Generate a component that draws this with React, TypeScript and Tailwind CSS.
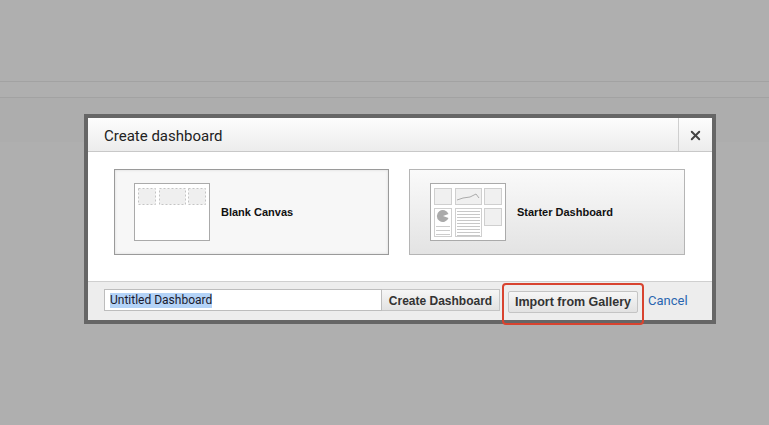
import { X } from "lucide-react";

function BlankThumb() {
  return (
    <svg width="76" height="58" viewBox="0 0 76 58" className="shrink-0">
      <rect x="0.5" y="0.5" width="75" height="57" fill="#fff" stroke="#aaa" />
      <rect x="4.5" y="5.5" width="17" height="16" fill="#efefef" stroke="#c4c4c4" strokeDasharray="2 2" />
      <rect x="25.5" y="5.5" width="26" height="16" fill="#efefef" stroke="#c4c4c4" strokeDasharray="2 2" />
      <rect x="54.5" y="5.5" width="17" height="16" fill="#efefef" stroke="#c4c4c4" strokeDasharray="2 2" />
    </svg>
  );
}

function StarterThumb() {
  const rows = [28, 31, 34, 37, 40, 43, 46, 49, 52];
  return (
    <svg width="76" height="58" viewBox="0 0 76 58" className="shrink-0">
      <rect x="0.5" y="0.5" width="75" height="57" fill="#fff" stroke="#aaa" />
      <rect x="4.5" y="5.5" width="17" height="16" fill="#f0f0f0" stroke="#cfcfcf" />
      <rect x="25.5" y="5.5" width="26" height="16" fill="#f0f0f0" stroke="#cfcfcf" />
      <polyline points="27,17 33,15 40,14 46,11 49,15" fill="none" stroke="#999" strokeWidth="0.8" />
      <rect x="54.5" y="5.5" width="17" height="16" fill="#f0f0f0" stroke="#cfcfcf" />
      <rect x="4.5" y="25.5" width="17" height="28" fill="#fff" stroke="#cfcfcf" />
      <path d="M13 33 L18.5 31 A6 6 0 1 0 18.5 35 Z" fill="#aaa" />
      <line x1="6" y1="43.5" x2="20" y2="43.5" stroke="#ccc" />
      <line x1="6" y1="47.5" x2="20" y2="47.5" stroke="#ccc" />
      <line x1="6" y1="51.5" x2="20" y2="51.5" stroke="#ccc" />
      <rect x="25.5" y="25.5" width="26" height="28" fill="#fff" stroke="#cfcfcf" />
      {rows.map((y) => (
        <line key={y} x1="27" y1={y + 0.5} x2="50" y2={y + 0.5} stroke="#c8c8c8" />
      ))}
      <rect x="54.5" y="25.5" width="17" height="17" fill="#f0f0f0" stroke="#cfcfcf" />
    </svg>
  );
}

export default function App() {
  return (
    <div className="relative h-[425px] w-full overflow-hidden bg-[#afafaf] font-['Roboto',sans-serif]">
      <div className="h-[81px]" />
      <div className="h-[16px] border-t border-[#a2a2a2]" />
      <div className="h-[45px] border-t border-[#a2a2a2] bg-[#adadad]" />

      <div className="absolute left-[84px] top-[114px] flex h-[210px] w-[632px] flex-col border-4 border-[#666] bg-white">
        <div className="flex h-[34px] items-stretch border-b border-[#c8c8c8] bg-gradient-to-b from-[#fdfdfd] to-[#ececec]">
          <div className="flex flex-1 items-center pl-[16px] pt-[3px] text-[15px] text-[#222]">Create dashboard</div>
          <div className="flex w-[34px] items-center justify-center border-l border-[#cfcfcf] pt-[2px]">
            <X size={15} strokeWidth={3} className="text-[#444]" />
          </div>
        </div>

        <div className="flex flex-1 gap-[20px] pl-[26px] pt-[17px]">
          <div className="flex h-[86px] w-[275px] items-center gap-[11px] border border-[#9a9a9a] bg-[#f7f7f7] pl-[19px] shadow-[inset_0_0_3px_rgba(0,0,0,0.12)]">
            <BlankThumb />
            <span className="font-['Liberation_Sans',Arial,sans-serif] text-[11px] font-bold text-[#111]">Blank Canvas</span>
          </div>
          <div className="flex h-[86px] w-[276px] items-center gap-[11px] border border-[#b5b5b5] bg-gradient-to-b from-[#fafafa] to-[#e3e3e3] pl-[20px]">
            <StarterThumb />
            <span className="font-['Liberation_Sans',Arial,sans-serif] text-[11px] font-bold text-[#111]">Starter Dashboard</span>
          </div>
        </div>

        <div className="flex h-[39px] items-start border-t border-[#cfcfcf] bg-[#ededed] pl-[16px] pt-[7px]">
          <div className="flex h-[22px] w-[278px] items-center border border-[#bdbdbd] bg-white pl-[5px] pt-[1px] text-[12px] text-[#1a1a2e]">
            <span className="bg-[#b4d3f7] leading-[15px]">Untitled Dashboard</span>
          </div>
          <button className="h-[22px] w-[118px] border border-l-0 border-[#c4c4c4] bg-gradient-to-b from-[#f6f6f6] to-[#e2e2e2] pt-[1px] font-['Liberation_Sans',Arial,sans-serif] text-[12px] font-bold text-[#333]">
            Create Dashboard
          </button>
          <div className="relative ml-[8px]">
            <button className="h-[22px] w-[130px] rounded-[2px] border border-[#c4c4c4] bg-gradient-to-b from-[#f6f6f6] to-[#e2e2e2] pt-[1px] font-['Liberation_Sans',Arial,sans-serif] text-[12.5px] font-bold text-[#333]">
              Import from Gallery
            </button>
            <div className="pointer-events-none absolute -bottom-[12px] -left-[6px] -right-[6px] -top-[6px] rounded-[4px] border-2 border-[#d8432f]" />
          </div>
          <span className="ml-[10px] pt-[1px] text-[13px] leading-[22px] text-[#2a66b0]">Cancel</span>
        </div>
      </div>
    </div>
  );
}
